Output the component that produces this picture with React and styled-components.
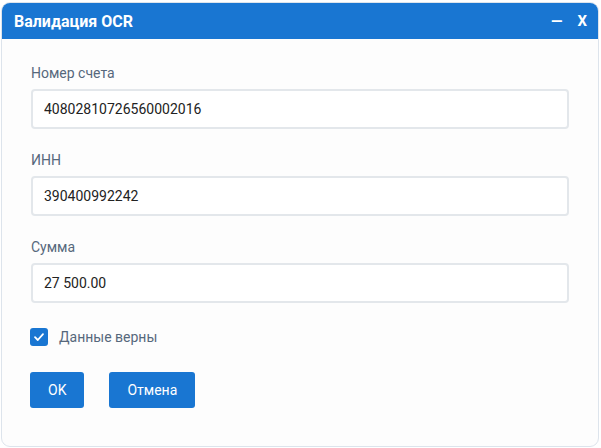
import React, { useState } from 'react';
import styled, { createGlobalStyle } from 'styled-components';

const GlobalStyle = createGlobalStyle`
  body {
    margin: 0;
    background: #ffffff;
    font-family: Roboto, "Noto Sans", sans-serif;
  }
`;

const Dialog = styled.div`
  box-sizing: border-box;
  width: 598px;
  height: 445px;
  margin: 2px 0 0 1px;
  border: 1px solid #dde4ec;
  border-radius: 9px;
  background: #fdfdfd;
  overflow: hidden;
  display: flex;
  flex-direction: column;
`;

const Header = styled.div`
  height: 36px;
  flex-shrink: 0;
  background: #1976d2;
  color: #ffffff;
  display: flex;
  align-items: center;
  justify-content: space-between;
  padding: 0 11px 0 12px;
`;

const Title = styled.h1`
  margin: 0;
  font-size: 16px;
  font-weight: 700;
`;

const HeaderActions = styled.div`
  display: flex;
  align-items: center;
  gap: 15px;
`;

const HeaderButton = styled.button`
  border: none;
  background: none;
  color: #ffffff;
  font-family: Roboto, sans-serif;
  font-weight: 700;
  font-size: 15px;
  padding: 0;
  cursor: pointer;
  line-height: 1;
`;

const Body = styled.div`
  padding: 26px 29px 0 29px;
  display: flex;
  flex-direction: column;
`;

const Field = styled.div`
  display: flex;
  flex-direction: column;
  gap: 8px;
  margin-bottom: 23px;
`;

const Label = styled.label`
  font-size: 14px;
  line-height: 16px;
  color: #56687c;
`;

const Input = styled.input`
  box-sizing: border-box;
  height: 40px;
  width: 100%;
  border: 2px solid #e3e7eb;
  border-radius: 4px;
  background: #ffffff;
  padding: 0 11px;
  font-family: Roboto, sans-serif;
  font-size: 14px;
  color: #222222;
  outline: none;
`;

const CheckRow = styled.label`
  display: flex;
  align-items: center;
  gap: 11px;
  margin: 2px 0 0 -1px;
  font-size: 14px;
  color: #56687c;
  cursor: pointer;
`;

const CheckBox = styled.span`
  width: 18px;
  height: 18px;
  border-radius: 3px;
  background: ${p => (p.$checked ? '#1976d2' : '#ffffff')};
  border: ${p => (p.$checked ? 'none' : '2px solid #c4ccd4')};
  display: flex;
  align-items: center;
  justify-content: center;
`;

const Actions = styled.div`
  display: flex;
  gap: 25px;
  margin: 26px 0 0 -1px;
`;

const Button = styled.button`
  height: 36px;
  padding: 0 ${p => p.$pad || 18}px;
  border: none;
  border-radius: 3px;
  background: #1976d2;
  color: #ffffff;
  font-family: Roboto, sans-serif;
  font-size: 14px;
  cursor: pointer;
`;

const App = () => {
  const [checked, setChecked] = useState(true);

  return (
    <>
      <GlobalStyle />
      <Dialog>
        <Header>
          <Title>Валидация OCR</Title>
          <HeaderActions>
            <HeaderButton>—</HeaderButton>
            <HeaderButton>X</HeaderButton>
          </HeaderActions>
        </Header>
        <Body>
          <Field>
            <Label>Номер счета</Label>
            <Input defaultValue="40802810726560002016" />
          </Field>
          <Field>
            <Label>ИНН</Label>
            <Input defaultValue="390400992242" />
          </Field>
          <Field>
            <Label>Сумма</Label>
            <Input defaultValue="27 500.00" />
          </Field>
          <CheckRow onClick={() => setChecked(!checked)}>
            <CheckBox $checked={checked}>
              {checked && (
                <svg width="12" height="12" viewBox="0 0 12 12">
                  <path d="M2 6.2 L4.8 9 L10 3.2" fill="none" stroke="#fff" strokeWidth="1.8" strokeLinecap="round" strokeLinejoin="round" />
                </svg>
              )}
            </CheckBox>
            Данные верны
          </CheckRow>
          <Actions>
            <Button $pad={18}>OK</Button>
            <Button $pad={18}>Отмена</Button>
          </Actions>
        </Body>
      </Dialog>
    </>
  );
};

export default App;
